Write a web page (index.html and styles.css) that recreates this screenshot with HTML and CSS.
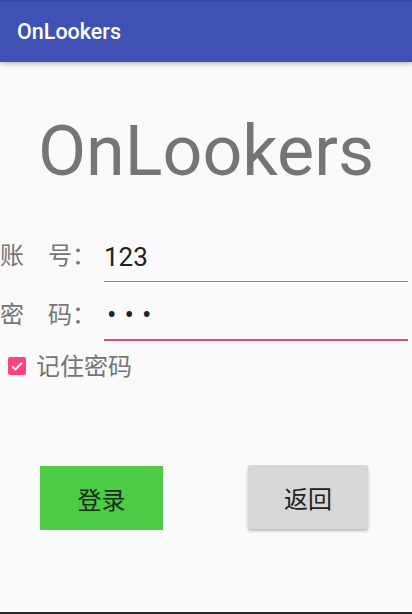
FILE: index.html
```html
<!DOCTYPE html>
<html lang="zh">
<head>
<meta charset="utf-8">
<title>OnLookers</title>
<link rel="stylesheet" href="styles.css">
</head>
<body>
<div class="screen">
  <header class="appbar">
    <span class="appbar-title">OnLookers</span>
  </header>
  <main class="content">
    <h1 class="logo">OnLookers</h1>
    <div class="field">
      <span class="label">账　号：</span>
      <div class="input">123</div>
    </div>
    <div class="field">
      <span class="label">密　码：</span>
      <div class="input focused"><span class="dots">•••</span></div>
    </div>
    <label class="remember">
      <span class="checkbox">
        <svg viewBox="0 0 18 18" width="18" height="18"><path d="M4 9.2 L7.4 12.4 L14 5.8" fill="none" stroke="#fff" stroke-width="2"/></svg>
      </span>
      <span class="remember-text">记住密码</span>
    </label>
    <div class="buttons">
      <button class="btn btn-login">登录</button>
      <button class="btn btn-back">返回</button>
    </div>
  </main>
  <div class="navline"></div>
</div>
</body>
</html>
```
FILE: styles.css
```css
html, body {
  margin: 0;
  padding: 0;
  background: #fafafa;
}
.screen {
  width: 412px;
  height: 614px;
  display: flex;
  flex-direction: column;
  overflow: hidden;
  font-family: Roboto, "Noto Sans CJK SC", sans-serif;
}
.appbar {
  height: 60px;
  border-top: 2px solid #3446a6;
  background: #3f51b5;
  box-shadow: 0 2px 4px rgba(0,0,0,0.25);
  display: flex;
  align-items: center;
  padding-left: 17px;
  position: relative;
  z-index: 1;
}
.appbar-title {
  color: #fff;
  font-size: 21.5px;
  font-weight: 500;
  margin-top: -2px;
}
.content {
  flex: 1;
  display: flex;
  flex-direction: column;
}
.logo {
  margin: 0;
  margin-top: 47px;
  margin-bottom: 30px;
  text-align: center;
  font-size: 70px;
  font-weight: 400;
  color: #757575;
  line-height: 84px;
  height: 84px;
}
.field {
  display: flex;
  align-items: flex-end;
  height: 59px;
}
.label {
  font-size: 24px;
  color: #757575;
  width: 104px;
  flex: none;
  line-height: 32px;
  padding-bottom: 12px;
  font-family: "Noto Sans CJK SC", sans-serif;
}
.input {
  width: 304px;
  font-size: 26px;
  color: #212121;
  line-height: 32px;
  padding-bottom: 8px;
  border-bottom: 1px solid #8a8a8a;
}
.input.focused {
  border-bottom: 2px solid #e0457f;
  padding-bottom: 8px;
}
.dots {
  letter-spacing: 8px;
  font-size: 28px;
  padding-left: 3px;
}
.remember {
  display: flex;
  align-items: center;
  margin-top: 9px;
  padding-left: 8px;
  height: 32px;
}
.checkbox {
  width: 18px;
  height: 18px;
  background: #ff4081;
  border-radius: 2px;
  display: flex;
  flex: none;
}
.remember-text {
  margin-left: 10px;
  font-size: 24px;
  color: #757575;
  font-family: "Noto Sans CJK SC", sans-serif;
  line-height: 32px;
  margin-top: -3px;
}
.buttons {
  display: flex;
  margin-top: 83px;
  padding-left: 40px;
  gap: 85px;
  align-items: flex-start;
}
.btn {
  border: none;
  font-size: 24px;
  color: #212121;
  font-family: "Noto Sans CJK SC", sans-serif;
  padding: 0;
}
.btn-login {
  width: 123px;
  height: 64px;
  margin-top: 1px;
  background: #4ccc44;
  color: #1a2a1a;
}
.btn-back {
  width: 120px;
  height: 64px;
  background: #d7d7d7;
  border-radius: 2px;
  box-shadow: 0 2px 3px rgba(0,0,0,0.25);
}
.navline {
  height: 2px;
  background: #2a2a2a;
  margin-top: auto;
}
```
